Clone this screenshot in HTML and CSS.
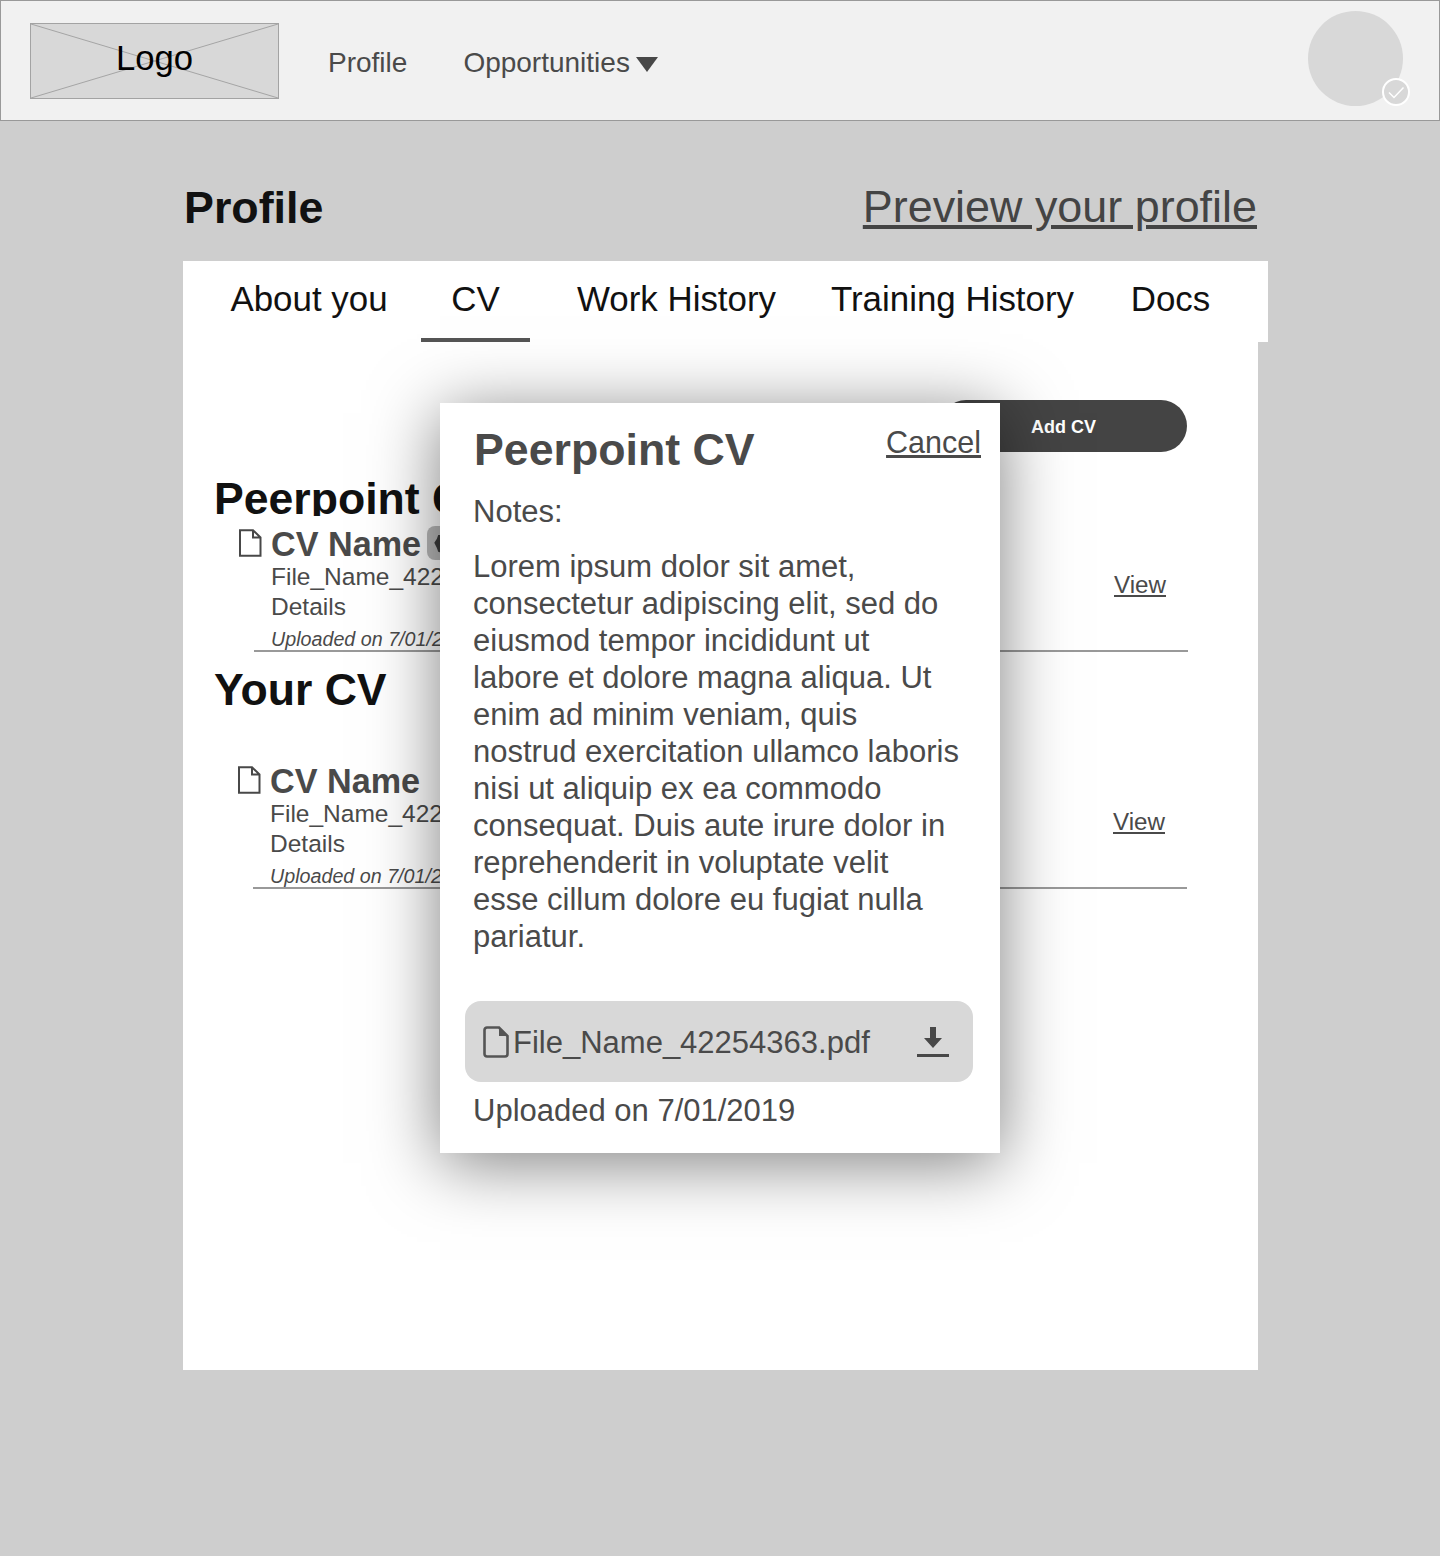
FILE: index.html
```html
<!DOCTYPE html>
<html lang="en">
<head>
  <meta charset="UTF-8" />
  <title>Profile - CV</title>
  <link rel="stylesheet" href="styles.css">
</head>
<body>

  <header class="topbar">
    <div class="logo">
      <svg class="logo-cross" viewBox="0 0 249 76" preserveAspectRatio="none">
        <path d="M0 0L249 76M249 0L0 76" stroke="#a3a3a3" stroke-width="1" fill="none" />
      </svg>
      <span class="logo-text">Logo</span>
    </div>
    <nav class="nav">
      <a class="nav-link">Profile</a>
      <a class="nav-link">Opportunities<span class="caret"></span></a>
    </nav>
    <div class="avatar">
      <svg class="avatar-badge" viewBox="0 0 30 30">
        <circle cx="15" cy="15" r="13" fill="#d8d8d8" stroke="#fff" stroke-width="2" />
        <path d="M8 15.5L13 20.5L22.5 10.5" stroke="#fff" stroke-width="1.5" fill="none" />
      </svg>
    </div>
  </header>

  <main class="page">
    <div class="title-row">
      <h1 class="page-title">Profile</h1>
      <a class="preview-link">Preview your profile</a>
    </div>

    <div class="tabs">
      <div class="tab">About you</div>
      <div class="tab tab-active">CV</div>
      <div class="tab">Work History</div>
      <div class="tab">Training History</div>
      <div class="tab">Docs</div>
    </div>

    <section class="panel">
      <button class="btn-add">Add CV</button>

      <h2 class="section-title section-first">Peerpoint CV</h2>
      <div class="cv-row">
        <svg class="doc-icon" viewBox="0 0 24 28">
          <path d="M2 1.2H15L22.5 8.5V26.8H2Z M15 1.2V8.5H22.5" stroke="#484848" stroke-width="2" fill="none" />
        </svg>
        <div class="cv-info">
          <div class="cv-name">CV Name <span class="cv-tag"><svg viewBox="0 0 20 20"><path d="M10 1l3 1 3 0 1 3 2 4-1 3-1 3-3 1-4 3-3-2-3-1-1-3-2-4 2-3 1-3 3 0z" fill="#3c3c3c" /></svg></span></div>
          <div class="cv-line">File_Name_42254363.pdf</div>
          <div class="cv-line">Details</div>
          <div class="cv-date">Uploaded on 7/01/2019</div>
        </div>
        <a class="cv-view">View</a>
      </div>

      <h2 class="section-title section-second">Your CV</h2>
      <div class="cv-row cv-row-second">
        <svg class="doc-icon" viewBox="0 0 24 28">
          <path d="M2 1.2H15L22.5 8.5V26.8H2Z M15 1.2V8.5H22.5" stroke="#484848" stroke-width="2" fill="none" />
        </svg>
        <div class="cv-info">
          <div class="cv-name">CV Name</div>
          <div class="cv-line">File_Name_42254363.pdf</div>
          <div class="cv-line">Details</div>
          <div class="cv-date">Uploaded on 7/01/2019</div>
        </div>
        <a class="cv-view">View</a>
      </div>

      <div class="modal">
        <div class="modal-head">
          <h2 class="modal-title">Peerpoint CV</h2>
          <a class="modal-cancel">Cancel</a>
        </div>
        <div class="modal-notes">Notes:</div>
        <p class="modal-text">Lorem ipsum dolor sit amet, consectetur adipiscing elit, sed do eiusmod tempor incididunt ut labore et dolore magna aliqua. Ut enim ad minim veniam, quis nostrud exercitation ullamco laboris nisi ut aliquip ex ea commodo consequat. Duis aute irure dolor in reprehenderit in voluptate velit esse cillum dolore eu fugiat nulla pariatur.</p>
        <div class="file-box">
          <svg class="file-icon" viewBox="0 0 26 32">
            <path d="M4 1.5H16L24.5 10V28a2.5 2.5 0 0 1-2.5 2.5H4A2.5 2.5 0 0 1 1.5 28V4A2.5 2.5 0 0 1 4 1.5Z" stroke="#555" stroke-width="2.6" fill="none" />
            <path d="M16 1.5L24.5 10H16Z" fill="#555" />
          </svg>
          <span class="file-name">File_Name_42254363.pdf</span>
          <svg class="download-icon" viewBox="0 0 32 32">
            <path d="M13 1H19V12H25L16 22L7 12H13Z" fill="#484848" />
            <rect x="0" y="28" width="32" height="3" fill="#484848" />
          </svg>
        </div>
        <div class="modal-date">Uploaded on 7/01/2019</div>
      </div>
    </section>
  </main>

</body>
</html>
```

FILE: styles.css
```css
* {
  box-sizing: border-box;
}

body {
  margin: 0;
  height: 1556px;
  overflow: hidden;
  background: #cecece;
  font-family: "Liberation Sans", Arial, sans-serif;
  color: #4a4a4a;
}

.topbar {
  height: 121px;
  display: flex;
  align-items: center;
  padding: 0 36px 0 29px;
  background: #f1f1f1;
  border: 1px solid #999;
}

.logo {
  position: relative;
  width: 249px;
  height: 76px;
  display: flex;
  align-items: center;
  justify-content: center;
  background: #d8d8d8;
  border: 1px solid #a3a3a3;
}

.logo-cross {
  position: absolute;
  inset: 0;
  width: 100%;
  height: 100%;
}

.logo-text {
  position: relative;
  margin-bottom: 4px;
  font-size: 34.67px;
  color: #000;
}

.nav {
  display: flex;
  gap: 56px;
  margin: 4px 0 0 49px;
}

.nav-link {
  display: flex;
  align-items: center;
  font-size: 28px;
}

.caret {
  width: 0;
  height: 0;
  margin: 3px 0 0 6px;
  border-left: 11px solid transparent;
  border-right: 11px solid transparent;
  border-top: 15px solid #484848;
}

.avatar {
  position: relative;
  width: 95px;
  height: 95px;
  margin: -5px 0 0 auto;
  border-radius: 50%;
  background: #d8d8d8;
}

.avatar-badge {
  position: absolute;
  right: -8px;
  bottom: -1px;
  width: 30px;
  height: 30px;
}

.page {
  width: 1085px;
  margin-left: 183px;
}

.title-row {
  width: 1074px;
  height: 140px;
  padding: 32px 0 0 1px;
  display: flex;
  align-items: center;
  justify-content: space-between;
}

.page-title {
  margin: 0;
  font-size: 44.8px;
  font-weight: 700;
  color: #111;
}

.preview-link {
  font-size: 44.9px;
  color: #444;
  text-decoration: underline;
}

.tabs {
  height: 81px;
  padding-left: 14px;
  display: grid;
  grid-template-columns: 224px 109px 293px 259px 177px;
  background: #fff;
}

.tab {
  padding-top: 18px;
  text-align: center;
  font-size: 34.9px;
  color: #111;
}

.tab-active {
  border-bottom: 4px solid #555;
}

.panel {
  position: relative;
  width: 1075px;
  height: 1028px;
  padding: 58px 71px 0 31px;
  display: flex;
  flex-direction: column;
  background: #fff;
}

.btn-add {
  align-self: flex-end;
  width: 247px;
  height: 52px;
  padding-top: 3px;
  border: none;
  border-radius: 26px;
  background: #444;
  color: #fff;
  font-family: inherit;
  font-size: 18px;
  font-weight: 700;
}

.section-title {
  margin-left: 0;
  font-size: 44.6px;
  line-height: 46px;
  font-weight: 700;
  color: #111;
  overflow: hidden;
}

.section-first {
  height: 40px;
  margin-top: 24px;
  margin-bottom: 0;
}

.section-second {
  height: 46px;
  margin-top: 15px;
  margin-bottom: 0;
}

.cv-row {
  display: flex;
  align-items: flex-start;
  margin: 0 -1px 0 40px;
  height: 136px;
  padding-top: 10px;
  border-bottom: 2px solid #999;
}

.cv-row-second {
  margin: 40px 0 0 39px;
}

.doc-icon {
  flex: none;
  width: 24px;
  height: 28px;
  margin: 3px 9px 0 -16px;
}

.cv-info {
  flex: 1;
}

.cv-name {
  display: flex;
  gap: 6px;
  font-size: 34.2px;
  line-height: 36px;
  font-weight: 700;
}

.cv-tag {
  width: 36px;
  height: 34px;
  padding: 5px 0 0 6px;
  border-radius: 8px;
  background: #bbb;
}

.cv-tag svg {
  display: block;
  width: 26px;
  height: 26px;
}

.cv-line {
  font-size: 24.5px;
  line-height: 30px;
}

.cv-date {
  margin-top: 5px;
  font-size: 19.7px;
  line-height: 24px;
  font-style: italic;
}

.cv-view {
  margin: 45px 22px 0 0;
  font-size: 24.2px;
  line-height: 28px;
  text-decoration: underline;
}

.modal {
  position: absolute;
  left: 257px;
  top: 61px;
  width: 560px;
  height: 750px;
  padding: 24px 19px 0 33px;
  background: #fff;
  box-shadow: 0 10px 65px rgba(0, 0, 0, 0.5);
}

.modal-head {
  display: flex;
  justify-content: space-between;
}

.modal-title {
  margin: 0 0 0 1px;
  font-size: 44.7px;
  line-height: 46px;
  font-weight: 700;
}

.modal-cancel {
  font-size: 30.5px;
  line-height: 30px;
  text-decoration: underline;
}

.modal-notes {
  margin-top: 20px;
  font-size: 31px;
  line-height: 37px;
}

.modal-text {
  width: 488px;
  margin: 18px 0 0;
  font-size: 31px;
  line-height: 37px;
}

.file-box {
  width: 508px;
  height: 81px;
  margin: 46px 0 0 -8px;
  padding: 0 24px 0 18px;
  display: flex;
  align-items: center;
  border-radius: 16px;
  background: #d8d8d8;
}

.file-icon {
  width: 26px;
  height: 32px;
  flex: none;
}

.file-name {
  flex: 1;
  margin: 2px 0 0 4px;
  font-size: 31px;
}

.download-icon {
  width: 32px;
  height: 32px;
  flex: none;
}

.modal-date {
  margin-top: 10px;
  font-size: 31px;
  line-height: 37px;
}
```
